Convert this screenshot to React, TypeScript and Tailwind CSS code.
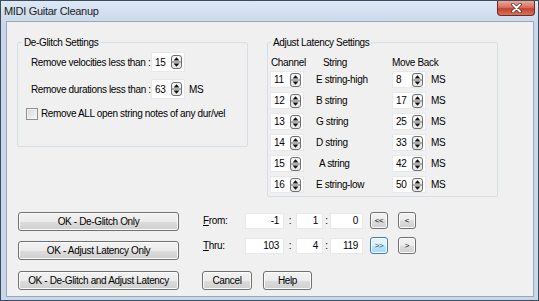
import React from "react";

const BTN =
  "flex items-center justify-center whitespace-nowrap rounded-[3px] border border-[#707070] bg-[linear-gradient(to_bottom,#f2f2f2_0%,#ebebeb_50%,#dddddd_50%,#cfcfcf_100%)] shadow-[inset_0_0_0_1px_#fcfcfc] text-black";

const BTN_HOT =
  "flex items-center justify-center whitespace-nowrap rounded-[3px] border border-[#3c7fb1] bg-[linear-gradient(to_bottom,#eaf6fd_0%,#d9f0fc_50%,#bee6fd_50%,#a7d9f5_100%)] shadow-[inset_0_0_0_1px_#fcfcfc] text-[#1c3f6e]";

const CHANNELS = [
  { ch: 11, name: "E string-high", back: 8, indent: false },
  { ch: 12, name: "B string", back: 17, indent: false },
  { ch: 13, name: "G string", back: 25, indent: false },
  { ch: 14, name: "D string", back: 33, indent: false },
  { ch: 15, name: "A string", back: 42, indent: true },
  { ch: 16, name: "E string-low", back: 50, indent: false },
];

function SpinIcon() {
  return (
    <svg width="11" height="14" viewBox="0 0 11 14" className="shrink-0">
      <rect x="0.5" y="0.5" width="10" height="13" rx="2.5" fill="#e9e9e9" stroke="#6f6f6f" />
      <rect x="1.5" y="1.5" width="8" height="5" rx="1.5" fill="#f7f7f7" />
      <line x1="1" y1="7" x2="10" y2="7" stroke="#6f6f6f" />
      <polygon points="5.5,2.2 8.4,5.6 2.6,5.6" fill="#111" />
      <polygon points="5.5,11.8 8.4,8.4 2.6,8.4" fill="#111" />
    </svg>
  );
}

function SpinEdit({ value, h }: { value: number; h: string }) {
  return (
    <div className={`flex w-[34px] ${h} items-center justify-between border border-[#e6e8ec] bg-white pl-[3px] pr-[2px]`}>
      <span>{value}</span>
      <SpinIcon />
    </div>
  );
}

function Box({ w, value }: { w: string; value: number }) {
  return (
    <div className={`flex ${w} h-[16px] items-center justify-end border border-[#e6e8ec] bg-white pr-[4px]`}>
      {value}
    </div>
  );
}

export default function App() {
  return (
    <div className="flex h-[301px] w-[539px] flex-col whitespace-nowrap border border-[#3d4b5a] bg-[#c8d8ea] text-[10px] leading-[13px] tracking-[-0.35px] text-black font-['Liberation_Sans',Arial,sans-serif]">
      {/* ---- title bar ---- */}
      <div className="flex h-[20px] items-start justify-between bg-[linear-gradient(to_bottom,#dde8f5,#cbdaec)]">
        <span className="pl-[3px] pt-[3px] text-[11px] leading-[14px] tracking-[-0.3px] text-[#1a1a1a]">
          MIDI Guitar Cleanup
        </span>
        <div className="mr-[3px] flex h-[15px] w-[38px] items-center justify-center rounded-b-[4px] border border-t-0 border-[#6e2a22] bg-[linear-gradient(to_bottom,#e9a99b_0%,#d7725f_45%,#c7412b_55%,#d5735c_100%)]">
          <svg width="11" height="10" viewBox="0 0 11 10">
            <path d="M2 1.5 L9 8.5 M9 1.5 L2 8.5" stroke="#5a2a24" strokeWidth="3.4" strokeLinecap="round" />
            <path d="M2 1.5 L9 8.5 M9 1.5 L2 8.5" stroke="#ffffff" strokeWidth="2" strokeLinecap="round" />
          </svg>
        </div>
      </div>

      {/* ---- client area ---- */}
      <div className="mb-[3px] ml-[5px] mr-[4px] flex flex-1 flex-col border border-[#98a8b9] bg-[#f0f0f0]">
        <div className="flex items-start gap-[19px] pl-[10px] pt-[14px]">
          {/* De-Glitch */}
          <fieldset className="h-[111px] w-[231px] rounded-[2px] border border-[#d5dfe5]">
            <legend className="ml-[4px] px-[2px]">De-Glitch Settings</legend>
            <div className="mt-[3px] flex h-[20px] items-center pl-[13px]">
              <span className="w-[120px]">Remove velocities less than :</span>
              <SpinEdit value={15} h="h-[20px]" />
            </div>
            <div className="mt-[7px] flex h-[20px] items-center pl-[13px]">
              <span className="w-[120px]">Remove durations less than :</span>
              <SpinEdit value={63} h="h-[20px]" />
              <span className="ml-[4px]">MS</span>
            </div>
            <div className="mt-[8px] flex h-[13px] items-center pl-[8px]">
              <div className="h-[12px] w-[12px] border border-[#8e8f8f] bg-linear-to-br from-[#d6d6d6] to-[#f8f8f8] shadow-[inset_0_0_0_1px_#f4f4f4]" />
              <span className="ml-[3px]">Remove ALL open string notes of any dur/vel</span>
            </div>
          </fieldset>

          {/* Adjust Latency */}
          <fieldset className="h-[161px] w-[231px] rounded-[2px] border border-[#d5dfe5]">
            <legend className="ml-[3px] px-[2px]">Adjust Latency Settings</legend>
            <div className="mt-[7px] flex h-[13px] items-center pl-[3px]">
              <span className="w-[52px]">Channel</span>
              <span className="w-[69px]">String</span>
              <span>Move Back</span>
            </div>
            <div className="mt-[2px] flex flex-col gap-[4px] pl-[2px]">
              {CHANNELS.map((r) => (
                <div key={r.ch} className="flex h-[17px] items-center">
                  <SpinEdit value={r.ch} h="h-[17px]" />
                  <span className={`ml-[12px] w-[76px] ${r.indent ? "pl-[3px]" : ""}`}>{r.name}</span>
                  <SpinEdit value={r.back} h="h-[17px]" />
                  <span className="ml-[5px]">MS</span>
                </div>
              ))}
            </div>
          </fieldset>
        </div>

        {/* ---- bottom area ---- */}
        <div className="mt-[15px] flex items-start gap-[24px] pl-[11px]">
          <div className="flex w-[161px] flex-col">
            <button className={`${BTN} h-[19px]`}>OK - De-Glitch Only</button>
            <button className={`${BTN} mt-[10px] h-[19px]`}>OK - Adjust Latency Only</button>
            <button className={`${BTN} mt-[11px] h-[19px]`}>OK - De-Glitch and Adjust Latency</button>
          </div>

          <div className="flex flex-col">
            <div className="flex h-[17px] items-center">
              <span className="w-[42px]">
                <span className="underline">F</span>rom:
              </span>
              <Box w="w-[39px]" value={-1} />
              <span className="w-[12px] text-center">:</span>
              <Box w="w-[27px]" value={1} />
              <span className="w-[7px] text-center">:</span>
              <Box w="w-[33px]" value={0} />
              <button className={`${BTN} ml-[7px] h-[17px] w-[18px] text-[8px] tracking-[-0.5px]`}>&lt;&lt;</button>
              <button className={`${BTN} ml-[10px] h-[17px] w-[18px] text-[8px]`}>&lt;</button>
            </div>
            <div className="mt-[8px] flex h-[17px] items-center">
              <span className="w-[42px]">
                <span className="underline">T</span>hru:
              </span>
              <Box w="w-[39px]" value={103} />
              <span className="w-[12px] text-center">:</span>
              <Box w="w-[27px]" value={4} />
              <span className="w-[7px] text-center">:</span>
              <Box w="w-[33px]" value={119} />
              <button className={`${BTN_HOT} ml-[7px] h-[17px] w-[18px] text-[8px] tracking-[-0.5px]`}>&gt;&gt;</button>
              <button className={`${BTN} ml-[10px] h-[17px] w-[18px] text-[8px]`}>&gt;</button>
            </div>
            <div className="-ml-[1px] mt-[17px] flex h-[19px] items-center gap-[11px]">
              <button className={`${BTN} h-[19px] w-[50px]`}>Cancel</button>
              <button className={`${BTN} h-[19px] w-[49px]`}>Help</button>
            </div>
          </div>
        </div>
      </div>
    </div>
  );
}
